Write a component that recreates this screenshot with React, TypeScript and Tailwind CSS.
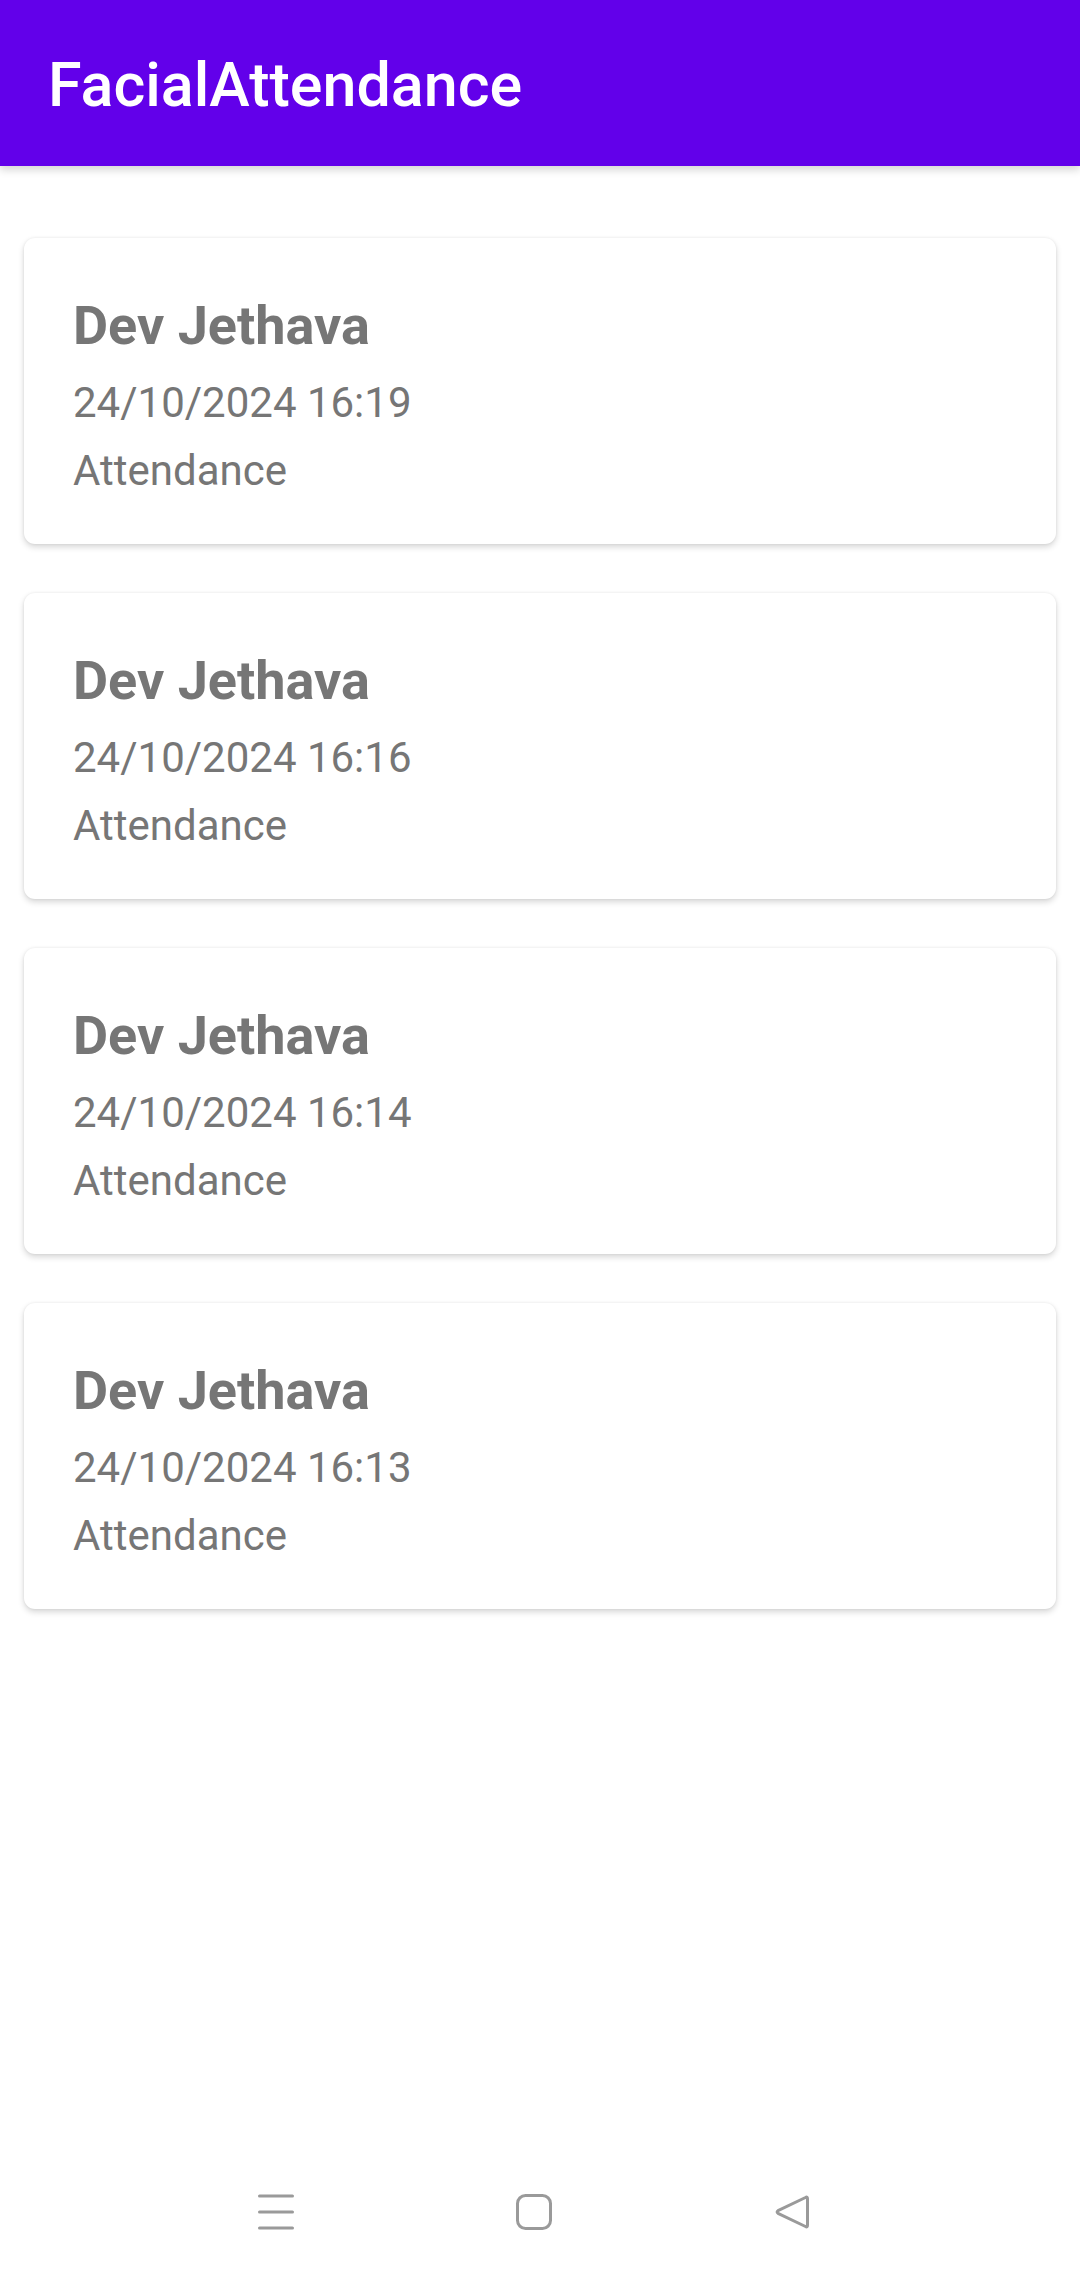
const records = [
  { id: 1, name: 'Dev Jethava', time: '24/10/2024 16:19', type: 'Attendance' },
  { id: 2, name: 'Dev Jethava', time: '24/10/2024 16:16', type: 'Attendance' },
  { id: 3, name: 'Dev Jethava', time: '24/10/2024 16:14', type: 'Attendance' },
  { id: 4, name: 'Dev Jethava', time: '24/10/2024 16:13', type: 'Attendance' },
];

function NavBar() {
  return (
    <div className="h-[132px] flex items-center pl-[258px] gap-[222px] bg-white">
      {/* menu */}
      <svg width="36" height="36" viewBox="0 0 36 36" className="shrink-0">
        <g stroke="#9a9a9a" strokeWidth="3" strokeLinecap="round">
          <line x1="1.5" y1="2" x2="34.5" y2="2" />
          <line x1="1.5" y1="18" x2="34.5" y2="18" />
          <line x1="1.5" y1="34" x2="34.5" y2="34" />
        </g>
      </svg>
      {/* home */}
      <svg width="36" height="36" viewBox="0 0 36 36" className="shrink-0">
        <rect x="1.5" y="1.5" width="33" height="33" rx="8" fill="none" stroke="#9a9a9a" strokeWidth="3" />
      </svg>
      {/* back */}
      <svg width="36" height="36" viewBox="0 0 36 36" className="shrink-0">
        <path
          d="M31.5 3.5 Q33.5 2.3 33.5 4.8 L33.5 31.2 Q33.5 33.7 31.5 32.5 L4 19.3 Q2.2 18 4 16.7 Z"
          fill="none"
          stroke="#9a9a9a"
          strokeWidth="3"
          strokeLinejoin="round"
        />
      </svg>
    </div>
  );
}

function App() {
  return (
    <div className="min-h-[2278px] flex flex-col bg-white font-['Roboto',sans-serif]">
      <header className="h-[166px] bg-[#6200ea] pl-[48px] pt-[55px] shadow-[0_4px_8px_rgba(0,0,0,0.16)] relative z-10">
        <h1 className="text-[61px] leading-[61px] text-white font-medium">FacialAttendance</h1>
      </header>

      <main className="flex-1 flex flex-col gap-[49px] px-[24px] pt-[72px]">
        {records.map((r) => (
          <div
            key={r.id}
            className="h-[306px] bg-white rounded-[11px] pl-[49px] pt-[56px] shadow-[0_3px_6px_rgba(0,0,0,0.16),0_0_3px_rgba(0,0,0,0.07)]"
          >
            <div className="text-[54px] leading-[64px] font-bold text-[#767676]">{r.name}</div>
            <div className="mt-[20px] text-[42px] leading-[50px] text-[#767676]">{r.time}</div>
            <div className="mt-[18px] text-[42px] leading-[50px] text-[#767676]">{r.type}</div>
          </div>
        ))}
      </main>

      <NavBar />
    </div>
  );
}

export default App;
